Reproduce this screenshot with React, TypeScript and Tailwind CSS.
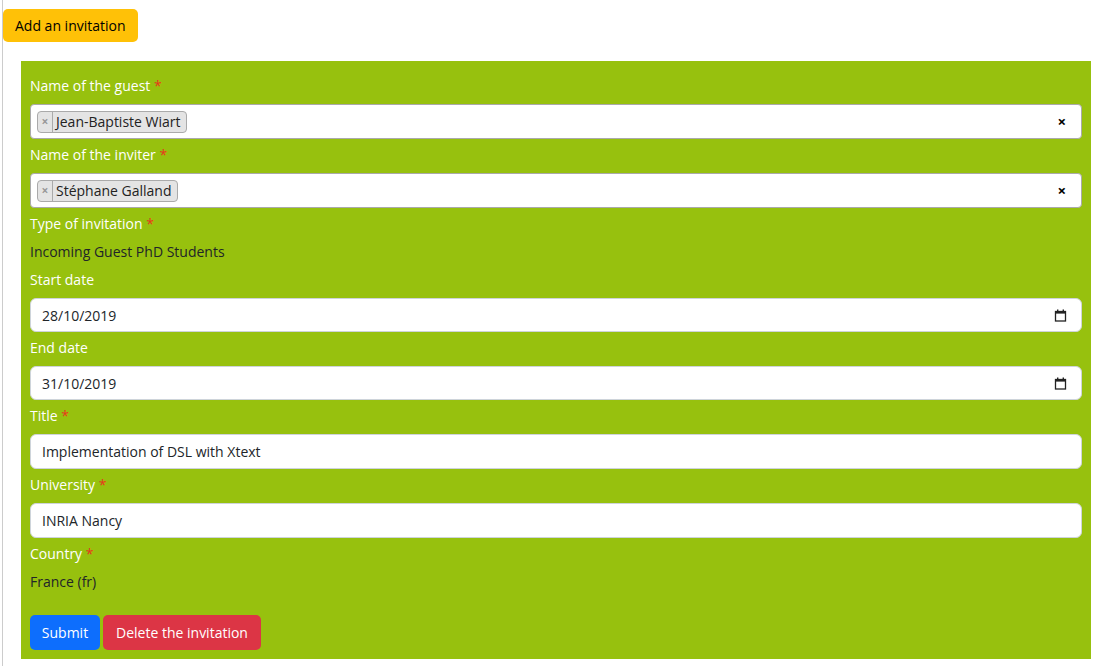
import React from "react";

const font = { fontFamily: '"Open Sans", "Noto Sans", sans-serif' };

function Label({ text, req }: { text: string; req?: boolean }) {
  return (
    <div className="h-[21px] mb-[7px] text-[14px] leading-[20px] text-white">
      {text}
      {req && <span className="text-[#e8361d]"> *</span>}
    </div>
  );
}

function Select2({ value }: { value: string }) {
  return (
    <div className="h-[35px] mb-[6px] bg-white border border-[#aaaaaa] rounded-[4px] flex items-center pl-[6px] pr-[15px]">
      <div className="h-[22px] flex items-stretch bg-[#e4e4e4] border border-[#aaaaaa] rounded-[4px] text-[14px] leading-[20px] text-[#222]">
        <span className="w-[15px] flex items-center justify-center text-[#999] text-[12px] font-bold border-r border-[#aaaaaa]">×</span>
        <span className="pl-[3px] pr-[5px]">{value}</span>
      </div>
      <div className="flex-1" />
      <span className="text-[15px] font-bold text-black leading-none">×</span>
    </div>
  );
}

function DateInput({ value }: { value: string }) {
  return (
    <div className="h-[34px] mb-[6px] bg-white border border-[#ced4da] rounded-[6px] flex items-center pl-[11px] pr-[14px] text-[14px] text-[#212529]">
      <span className="flex-1">{value}</span>
      <svg width="13" height="13" viewBox="0 0 13 13">
        <rect x="1.5" y="2.5" width="10" height="9.5" fill="none" stroke="#222" strokeWidth="1.3" />
        <rect x="1" y="2" width="11" height="2.6" fill="#222" />
        <rect x="3" y="0.5" width="1.4" height="2" fill="#222" />
        <rect x="8.6" y="0.5" width="1.4" height="2" fill="#222" />
      </svg>
    </div>
  );
}

function TextInput({ value }: { value: string }) {
  return (
    <div className="h-[35px] mb-[6px] bg-white border border-[#ced4da] rounded-[6px] flex items-center pl-[11px] text-[14px] text-[#212529]">
      {value}
    </div>
  );
}

function Static({ text }: { text: string }) {
  return <div className="h-[21px] mb-[7px] text-[14px] leading-[20px] text-[#212529]">{text}</div>;
}

export default function App() {
  return (
    <div className="w-[1097px] h-[666px] bg-white pl-[2px]" style={font}>
      <div className="h-full border-l border-[#cccccc] pt-[9px]">
        <button className="h-[33px] px-[12px] bg-[#ffc107] rounded-[5px] text-[14px] text-black">
          Add an invitation
        </button>
        <div className="mt-[19px] ml-[18px] mr-[6px] bg-[#97c10e] px-[9px] pt-[15px] pb-[9px]">
          <Label text="Name of the guest" req />
          <Select2 value="Jean-Baptiste Wiart" />
          <Label text="Name of the inviter" req />
          <Select2 value="Stéphane Galland" />
          <Label text="Type of invitation" req />
          <Static text="Incoming Guest PhD Students" />
          <Label text="Start date" />
          <DateInput value="28/10/2019" />
          <Label text="End date" />
          <DateInput value="31/10/2019" />
          <Label text="Title" req />
          <TextInput value="Implementation of DSL with Xtext" />
          <Label text="University" req />
          <TextInput value="INRIA Nancy" />
          <Label text="Country" req />
          <Static text="France (fr)" />
          <div className="pt-[15px] flex gap-[3px]">
            <button className="h-[35px] w-[70px] bg-[#0d6efd] rounded-[5px] text-[14px] text-white">Submit</button>
            <button className="h-[35px] w-[158px] bg-[#dc3545] rounded-[5px] text-[14px] text-white">Delete the invitation</button>
          </div>
        </div>
      </div>
    </div>
  );
}
